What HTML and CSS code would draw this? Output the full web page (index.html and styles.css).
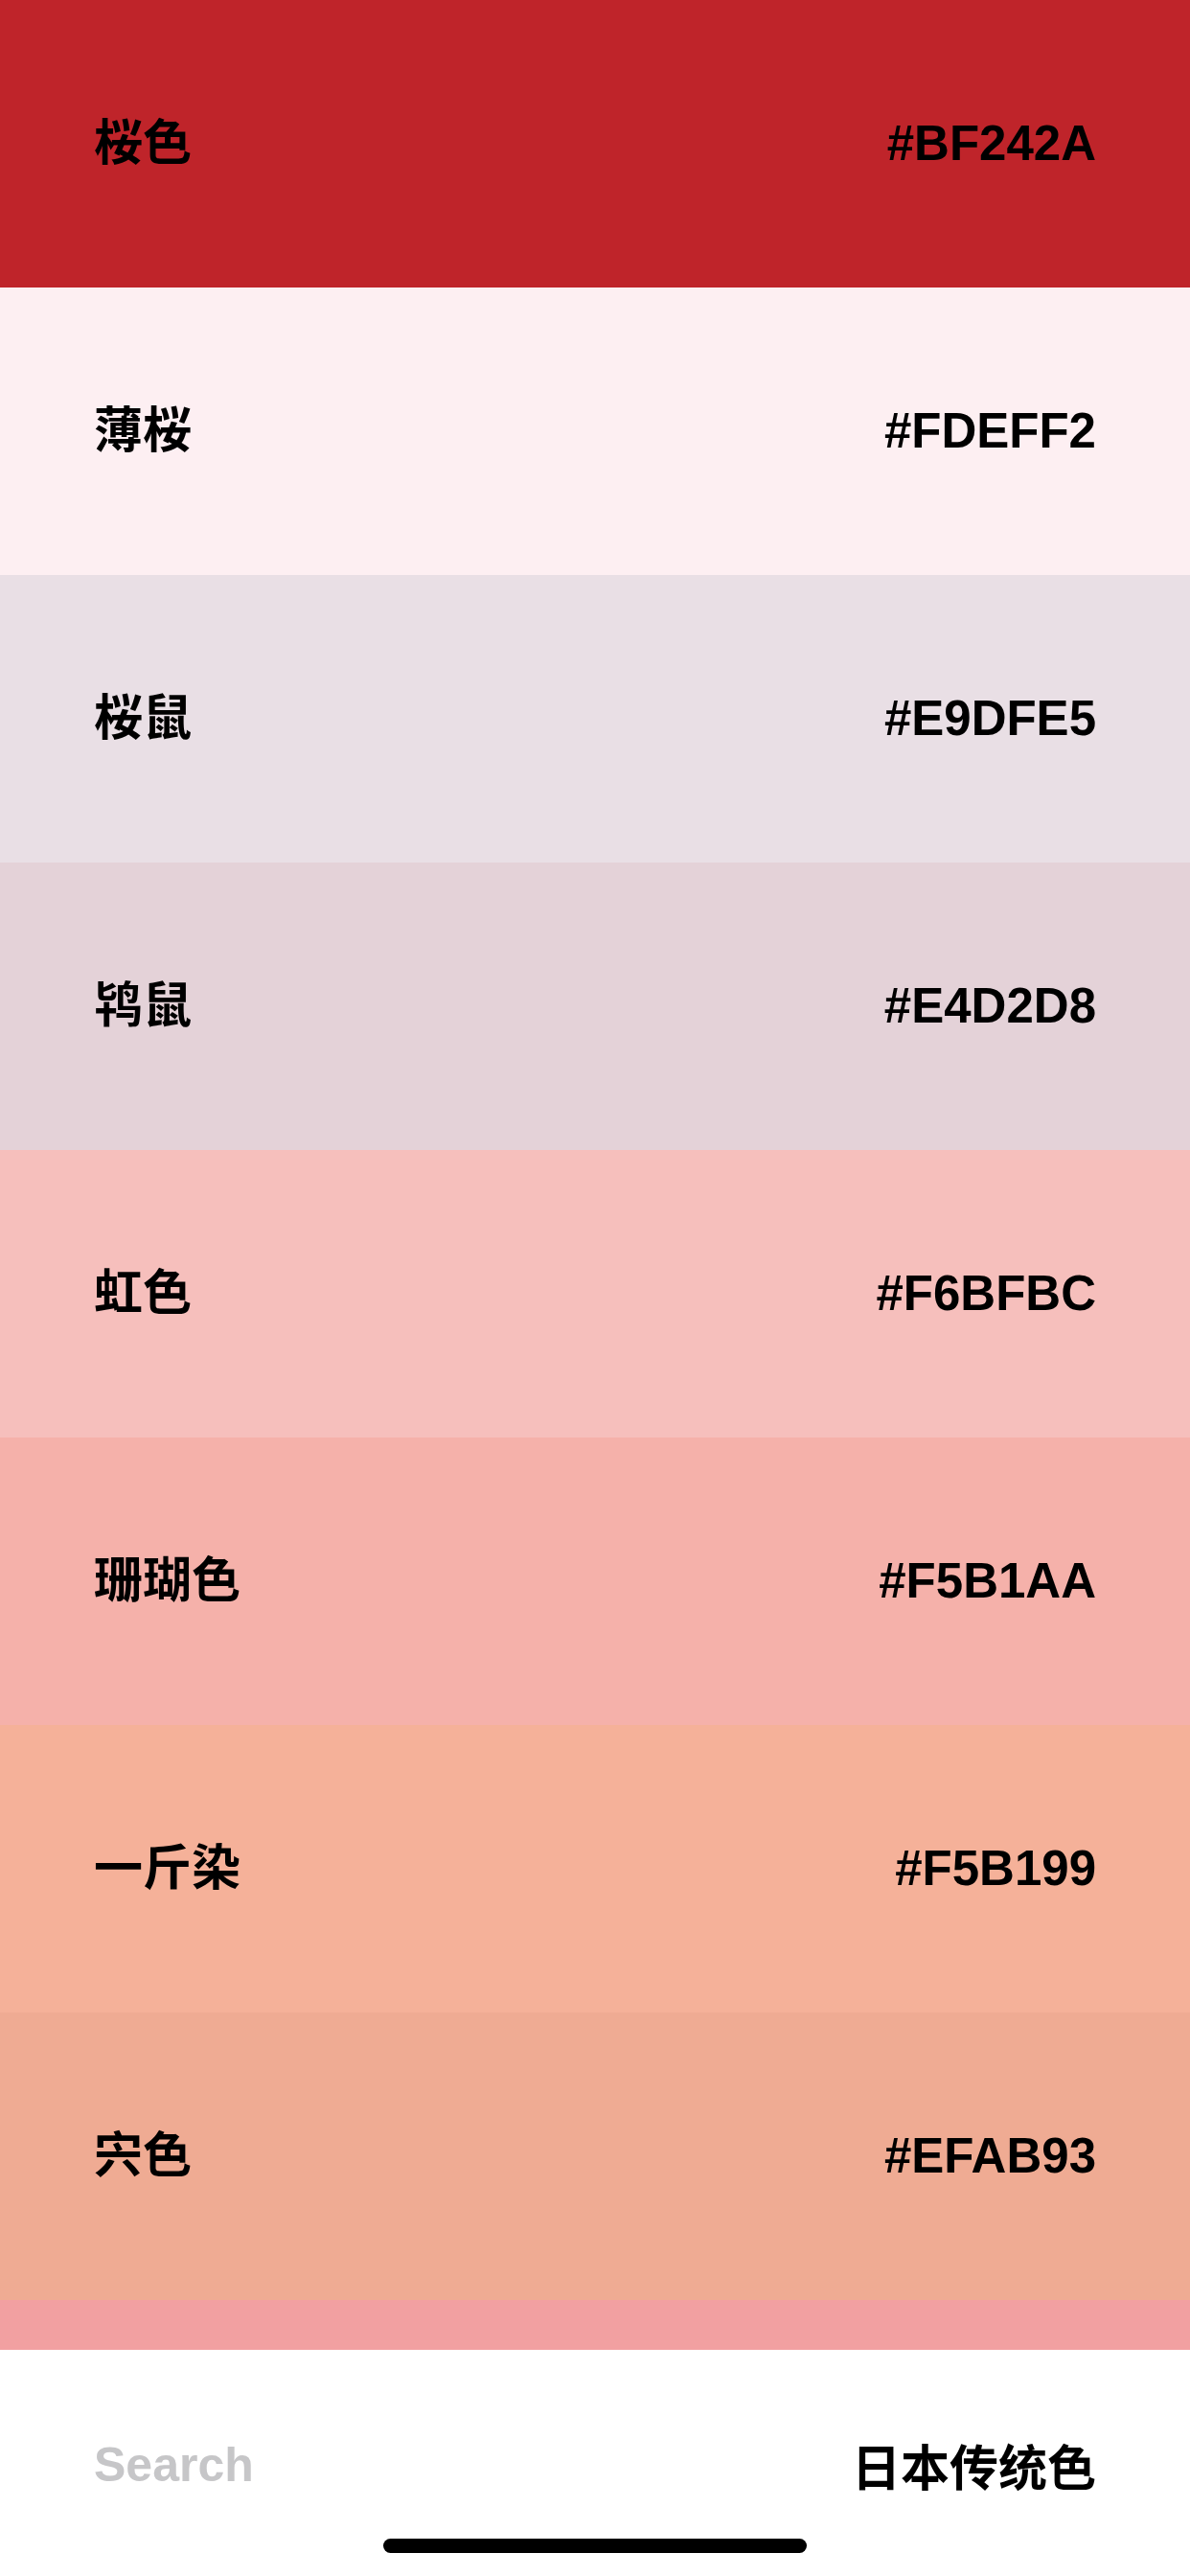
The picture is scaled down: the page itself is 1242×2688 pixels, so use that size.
FILE: index.html
```html
<!DOCTYPE html>
<html lang="zh">
<head>
<meta charset="utf-8">
<title>日本传统色</title>
<link rel="stylesheet" href="styles.css">
</head>
<body>
<div class="screen">
  <div class="list">
    <div class="row" style="background:#BF242A"><span class="name">桜色</span><span class="hex">#BF242A</span></div>
    <div class="row" style="background:#FDEFF2"><span class="name">薄桜</span><span class="hex">#FDEFF2</span></div>
    <div class="row" style="background:#E9DFE5"><span class="name">桜鼠</span><span class="hex">#E9DFE5</span></div>
    <div class="row" style="background:#E4D2D8"><span class="name">鸨鼠</span><span class="hex">#E4D2D8</span></div>
    <div class="row" style="background:#F6BFBC"><span class="name">虹色</span><span class="hex">#F6BFBC</span></div>
    <div class="row" style="background:#F5B1AA"><span class="name">珊瑚色</span><span class="hex">#F5B1AA</span></div>
    <div class="row" style="background:#F5B199"><span class="name">一斤染</span><span class="hex">#F5B199</span></div>
    <div class="row" style="background:#EFAB93"><span class="name">宍色</span><span class="hex">#EFAB93</span></div>
    <div class="row" style="background:#F2A0A1"></div>
  </div>
  <div class="footer">
    <div class="bar">
      <span class="search">Search</span>
      <span class="title">日本传统色</span>
    </div>
    <div class="home"></div>
  </div>
</div>
</body>
</html>
```
FILE: styles.css
```css
html, body {
  margin: 0;
  padding: 0;
  background: #ffffff;
}
.screen {
  width: 1242px;
  height: 2688px;
  display: flex;
  flex-direction: column;
  overflow: hidden;
}
.list {
  height: 2452px;
  overflow: hidden;
  flex: none;
}
.row {
  height: 300px;
  box-sizing: border-box;
  padding: 0 98px;
  display: flex;
  justify-content: space-between;
  align-items: center;
  color: #000;
}
.name {
  font-family: "Liberation Sans", "Noto Sans CJK SC", sans-serif;
  font-size: 51px;
  font-weight: 700;
  line-height: 60px;
}
.hex {
  font-family: "Liberation Sans", sans-serif;
  font-size: 51px;
  font-weight: 700;
  line-height: 60px;
}
.footer {
  flex: 1;
  background: #fff;
  display: flex;
  flex-direction: column;
  align-items: center;
}
.bar {
  align-self: stretch;
  margin-top: 90px;
  padding: 0 98px;
  height: 60px;
  display: flex;
  justify-content: space-between;
  align-items: center;
}
.search {
  font-family: "Liberation Sans", sans-serif;
  font-size: 50px;
  font-weight: 700;
  color: #c6c6c8;
}
.title {
  font-family: "Liberation Sans", "Noto Sans CJK SC", sans-serif;
  font-size: 51px;
  font-weight: 700;
  color: #000;
}
.home {
  margin-top: 47px;
  width: 442px;
  height: 15px;
  border-radius: 8px;
  background: #000;
}
```
